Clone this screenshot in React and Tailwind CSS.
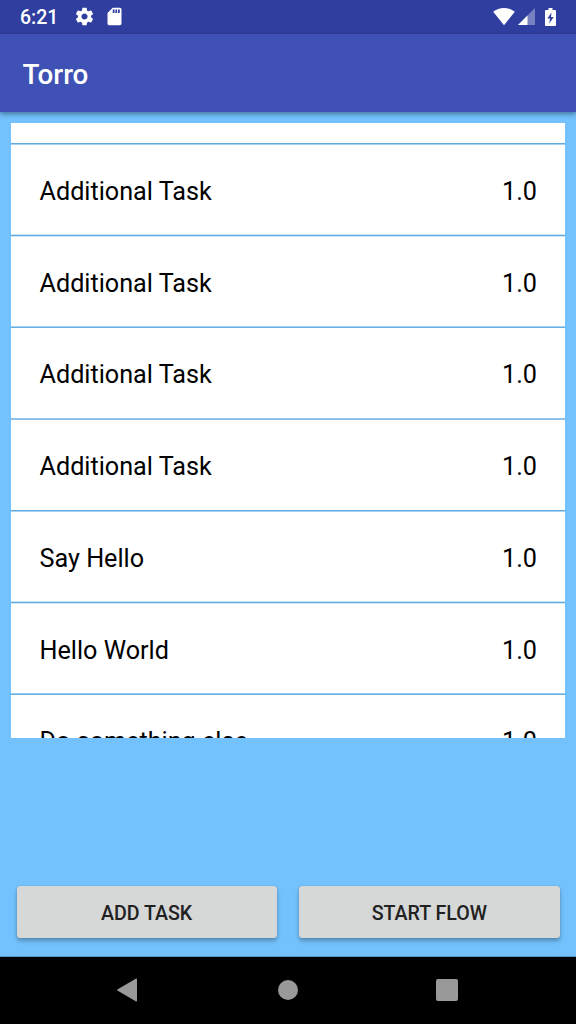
const ROWS = [
  { name: 'Additional Task', pad: 'pt-[3px]', line: 'border-t-white bg-[#62a9dd] border-b-[#a8d3f4]', height: 'h-[92px]' },
  { name: 'Additional Task', pad: 'pt-[3px]', line: 'border-t-[#c9e5fa] bg-[#62a9dd] border-b-[#cfe8fa]', height: 'h-[92px]' },
  { name: 'Additional Task', pad: 'pt-[1px]', line: 'border-t-[#a5d2f4] bg-[#68aee2] border-b-white', height: 'h-[92px]' },
  { name: 'Additional Task', pad: 'pt-[1px]', line: 'border-t-[#8fc5ee] bg-[#8abde6] border-b-white', height: 'h-[91px]' },
  { name: 'Say Hello', pad: 'pt-[3px]', line: 'border-t-white bg-[#62a9dd] border-b-[#a8d3f4]', height: 'h-[92px]' },
  { name: 'Hello World', pad: 'pt-[3px]', line: 'border-t-[#c9e5fa] bg-[#62a9dd] border-b-[#cfe8fa]', height: 'h-[92px]' },
  { name: 'Do something else', pad: 'pt-[1px]', line: 'border-t-[#9acbf0] bg-[#68aee2] border-b-white', height: 'h-[92px]' },
];

function StatusBar() {
  return (
    <header className="flex h-[33.6px] shrink-0 items-center bg-[#303f9f] text-white">
      <span className="ml-[20px] w-[54px] pt-[2px] text-[19.5px] leading-none font-medium">6:21</span>
      <svg className="size-[21px]" viewBox="0 0 24 24" fill="currentColor">
        <path d="M19.43 12.98c.04-.32.07-.64.07-.98s-.03-.66-.07-.98l2.11-1.65c.19-.15.24-.42.12-.64l-2-3.46c-.12-.22-.39-.3-.61-.22l-2.49 1c-.52-.4-1.08-.73-1.69-.98l-.38-2.65A.488.488 0 0 0 14 2h-4c-.25 0-.46.18-.49.42l-.38 2.65c-.61.25-1.17.59-1.69.98l-2.49-1c-.23-.09-.49 0-.61.22l-2 3.46c-.13.22-.07.49.12.64l2.11 1.65c-.04.32-.07.65-.07.98s.03.66.07.98l-2.11 1.65c-.19.15-.24.42-.12.64l2 3.46c.12.22.39.3.61.22l2.49-1c.52.4 1.08.73 1.69.98l.38 2.65c.03.24.24.42.49.42h4c.25 0 .46-.18.49-.42l.38-2.65c.61-.25 1.17-.59 1.69-.98l2.49 1c.23.09.49 0 .61-.22l2-3.46c.12-.22.07-.49-.12-.64l-2.11-1.65zM12 15.500c-1.930 0-3.500-1.570-3.500-3.500s1.570-3.500 3.500-3.500 3.500 1.570 3.500 3.500-1.570 3.500-3.500 3.500z" />
      </svg>
      <svg className="ml-[9px] size-[21px]" viewBox="0 0 24 24" fill="currentColor">
        <path d="M18 2h-8L4.020 8 4 20c0 1.100.9 2 2 2h12c1.100 0 2-.9 2-2V4c0-1.100-.9-2-2-2zm-6 6h-2V4h2v4zm3 0h-2V4h2v4zm3 0h-2V4h2v4z" />
      </svg>
      <svg className="ml-auto h-[18px] w-[22px]" viewBox="0 0 22 18" fill="currentColor">
        <path d="M.2 3.700C3.200 1.400 6.700 0 11 0s7.800 1.400 10.800 3.700L11 17.200z" />
      </svg>
      <svg className="ml-[3px] size-[17px]" viewBox="0 0 17 17" fill="currentColor">
        <path d="M0 17 17 0v17z" fillOpacity=".35" />
        <path d="M0 17 9.500 7.500V17z" />
      </svg>
      <svg className="mr-[20.500px] ml-[10px] h-[18px] w-[11px]" viewBox="0 0 11 18" fill="currentColor">
        <path fillRule="evenodd" d="M3.500 0h4v2H10a1 1 0 0 1 1 1v14a1 1 0 0 1-1 1H1a1 1 0 0 1-1-1V3a1 1 0 0 1 1-1h2.500zM6.500 4.500 2.300 10.500H5L4.300 15.500 8.700 9H6z" />
      </svg>
    </header>
  );
}

function TaskRow({ name, height, line, pad }) {
  return (
    <li className={`flex shrink-0 flex-col ${height}`}>
      <div className={`h-[3px] shrink-0 border-y ${line}`} />
      <div className={`flex h-[90px] shrink-0 items-center justify-between pr-[28px] pl-[28.500px] text-[25.200px] leading-none ${pad}`}>
        <span>{name}</span>
        <span>1.0</span>
      </div>
    </li>
  );
}

function ActionButton({ children }) {
  return (
    <button className="h-[51.500px] flex-1 rounded-[3px] bg-[#d6d7d7] pt-[4px] text-[19.600px] leading-none font-medium text-[#212121] shadow-[0_3px_4px_rgba(0,0,0,0.28),0_0_1px_rgba(0,0,0,0.3)]">
      {children}
    </button>
  );
}

function NavigationBar() {
  return (
    <nav className="flex h-[67px] shrink-0 items-center bg-black pb-px text-[#999]">
      <svg className="ml-[117px] h-[24px] w-[21px]" viewBox="0 0 21 24" fill="currentColor">
        <path d="M.8 11.200 18.700.8q1.300-.7 1.300.7v21q0 1.400-1.300.7L.8 12.800q-1.300-.8 0-1.600z" />
      </svg>
      <span className="ml-[139.700px] size-[20px] rounded-full bg-[#999]" />
      <span className="ml-[138.500px] size-[21.500px] rounded-[2px] bg-[#999]" />
    </nav>
  );
}

export default function App() {
  return (
    <div className="flex h-[1024px] w-[576px] flex-col overflow-hidden bg-[#73c2fd] font-['Roboto',sans-serif] text-black">
      <StatusBar />
      <div className="flex h-[78.400px] shrink-0 items-center bg-[#3f51b5] pt-[5px] pl-[22.500px] text-[27.800px] leading-none font-medium text-white shadow-[0_2px_5px_rgba(0,0,0,0.4)]">
        Torro
      </div>
      <main className="flex min-h-0 flex-1 flex-col pt-[11px]">
        <ul className="mx-[11px] flex h-[614.700px] w-[554px] flex-col overflow-hidden bg-white pt-[19px]">
          {ROWS.map((row, i) => (
            <TaskRow key={i} {...row} />
          ))}
        </ul>
        <div className="mt-auto flex gap-[22.500px] px-[16.500px] pb-[18.500px]">
          <ActionButton>ADD TASK</ActionButton>
          <ActionButton>START FLOW</ActionButton>
        </div>
        <div className="h-px shrink-0 bg-[#5b9bca]" />
      </main>
      <NavigationBar />
    </div>
  );
}
